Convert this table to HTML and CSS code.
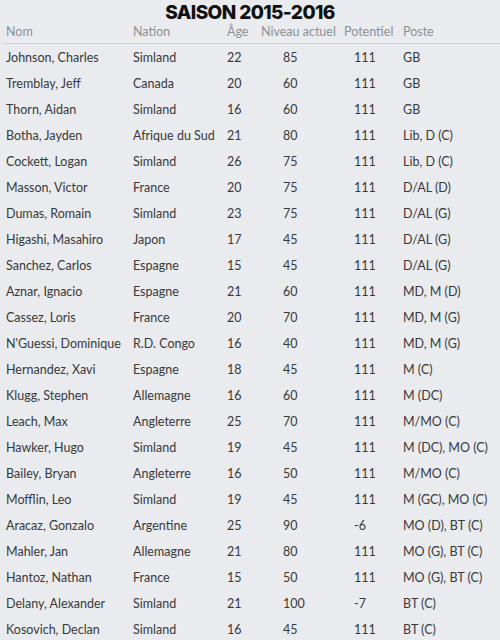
FILE: index.html
```html
<!DOCTYPE html>
<html lang="fr">
<head>
<meta charset="utf-8">
<title>Saison 2015-2016</title>
<link rel="stylesheet" href="styles.css">
</head>
<body>
<div class="page">
  <h1 class="title">SAISON 2015-2016</h1>
  <div class="table">
    <div class="row head">
      <span>Nom</span><span>Nation</span><span>Âge</span><span>Niveau actuel</span><span>Potentiel</span><span>Poste</span>
    </div>
    <div class="row"><span>Johnson, Charles</span><span>Simland</span><span>22</span><span class="lvl">85</span><span class="pot">111</span><span>GB</span></div>
    <div class="row"><span>Tremblay, Jeff</span><span>Canada</span><span>20</span><span class="lvl">60</span><span class="pot">111</span><span>GB</span></div>
    <div class="row"><span>Thorn, Aidan</span><span>Simland</span><span>16</span><span class="lvl">60</span><span class="pot">111</span><span>GB</span></div>
    <div class="row"><span>Botha, Jayden</span><span>Afrique du Sud</span><span>21</span><span class="lvl">80</span><span class="pot">111</span><span>Lib, D (C)</span></div>
    <div class="row"><span>Cockett, Logan</span><span>Simland</span><span>26</span><span class="lvl">75</span><span class="pot">111</span><span>Lib, D (C)</span></div>
    <div class="row"><span>Masson, Victor</span><span>France</span><span>20</span><span class="lvl">75</span><span class="pot">111</span><span>D/AL (D)</span></div>
    <div class="row"><span>Dumas, Romain</span><span>Simland</span><span>23</span><span class="lvl">75</span><span class="pot">111</span><span>D/AL (G)</span></div>
    <div class="row"><span>Higashi, Masahiro</span><span>Japon</span><span>17</span><span class="lvl">45</span><span class="pot">111</span><span>D/AL (G)</span></div>
    <div class="row"><span>Sanchez, Carlos</span><span>Espagne</span><span>15</span><span class="lvl">45</span><span class="pot">111</span><span>D/AL (G)</span></div>
    <div class="row"><span>Aznar, Ignacio</span><span>Espagne</span><span>21</span><span class="lvl">60</span><span class="pot">111</span><span>MD, M (D)</span></div>
    <div class="row"><span>Cassez, Loris</span><span>France</span><span>20</span><span class="lvl">70</span><span class="pot">111</span><span>MD, M (G)</span></div>
    <div class="row"><span>N'Guessi, Dominique</span><span>R.D. Congo</span><span>16</span><span class="lvl">40</span><span class="pot">111</span><span>MD, M (G)</span></div>
    <div class="row"><span>Hernandez, Xavi</span><span>Espagne</span><span>18</span><span class="lvl">45</span><span class="pot">111</span><span>M (C)</span></div>
    <div class="row"><span>Klugg, Stephen</span><span>Allemagne</span><span>16</span><span class="lvl">60</span><span class="pot">111</span><span>M (DC)</span></div>
    <div class="row"><span>Leach, Max</span><span>Angleterre</span><span>25</span><span class="lvl">70</span><span class="pot">111</span><span>M/MO (C)</span></div>
    <div class="row"><span>Hawker, Hugo</span><span>Simland</span><span>19</span><span class="lvl">45</span><span class="pot">111</span><span>M (DC), MO (C)</span></div>
    <div class="row"><span>Bailey, Bryan</span><span>Angleterre</span><span>16</span><span class="lvl">50</span><span class="pot">111</span><span>M/MO (C)</span></div>
    <div class="row"><span>Mofflin, Leo</span><span>Simland</span><span>19</span><span class="lvl">45</span><span class="pot">111</span><span>M (GC), MO (C)</span></div>
    <div class="row"><span>Aracaz, Gonzalo</span><span>Argentine</span><span>25</span><span class="lvl">90</span><span class="pot">-6</span><span>MO (D), BT (C)</span></div>
    <div class="row"><span>Mahler, Jan</span><span>Allemagne</span><span>21</span><span class="lvl">80</span><span class="pot">111</span><span>MO (G), BT (C)</span></div>
    <div class="row"><span>Hantoz, Nathan</span><span>France</span><span>15</span><span class="lvl">50</span><span class="pot">111</span><span>MO (G), BT (C)</span></div>
    <div class="row"><span>Delany, Alexander</span><span>Simland</span><span>21</span><span class="lvl">100</span><span class="pot">-7</span><span>BT (C)</span></div>
    <div class="row"><span>Kosovich, Declan</span><span>Simland</span><span>16</span><span class="lvl">45</span><span class="pot">111</span><span>BT (C)</span></div>
  </div>
</div>
</body>
</html>
```

FILE: styles.css
```css
html, body {
  margin: 0;
  padding: 0;
}
body {
  background: #e9ebee;
  font-family: Lato, "Open Sans", sans-serif;
  color: #38393b;
  width: 500px;
  height: 640px;
  overflow: hidden;
}
.page {
  display: flex;
  flex-direction: column;
}
.title {
  margin: 0;
  height: 23px;
  line-height: 25px;
  text-align: center;
  font-family: Inter, sans-serif;
  font-weight: 800;
  font-size: 19px;
  letter-spacing: -0.6px;
  color: #111;
}
.table {
  display: flex;
  flex-direction: column;
  padding-left: 4px;
}
.row {
  display: grid;
  grid-template-columns: 127px 94px 34px 83px 59px 1fr;
  height: 26px;
  align-items: center;
  padding-left: 2px;
  font-size: 12.5px;
  white-space: nowrap;
}
.row.head {
  color: #8d9196;
  border-bottom: 1px solid #cdd1d6;
  align-items: start;
  padding-top: 1px;
  box-sizing: border-box;
  height: 21px;
}
.lvl {
  padding-left: 22px;
}
.pot {
  padding-left: 10px;
}
```
